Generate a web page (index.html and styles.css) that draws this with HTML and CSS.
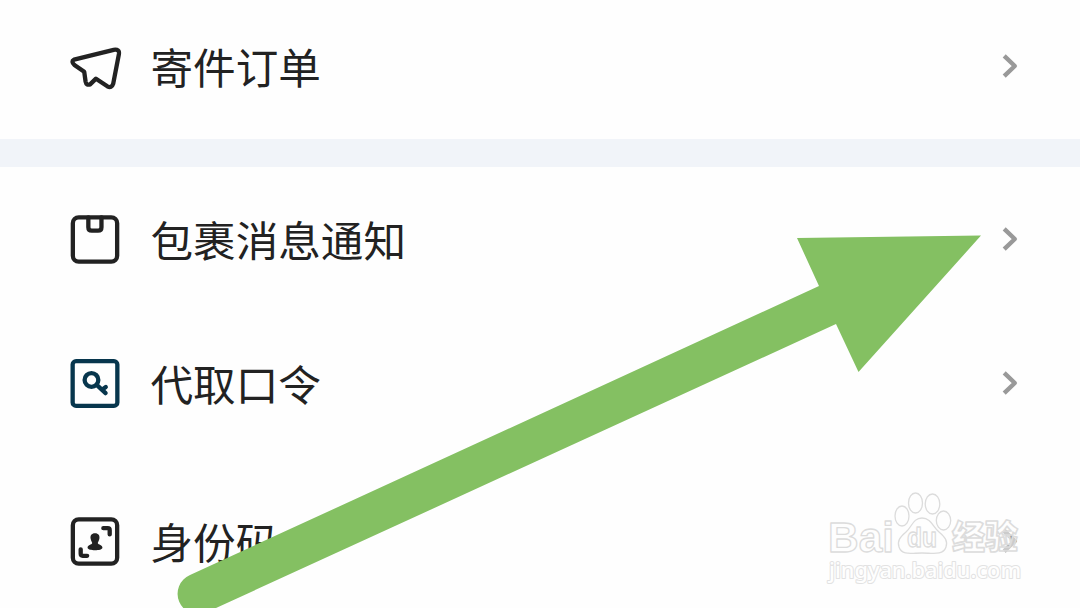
FILE: index.html
```html
<!DOCTYPE html>
<html lang="zh-CN">
<head>
    <meta charset="UTF-8">
    <meta name="viewport" content="width=device-width, initial-scale=1.0">
    <title>包裹服务</title>
    <link rel="stylesheet" href="styles.css">
</head>
<body>

    <div class="menu">
        <div class="group group-first">
            <a class="row">
                <svg class="icon" viewBox="0 0 50 50">
                    <path d="M3.6 17 L44 7 Q50.2 6 49.4 11.4 L43.6 41.4 Q42 46.6 37.6 44.2 L26 36.4 L20 42.2 Q16.2 43.6 15.4 39.4 L14 29.4 L4 22.4 Q0.2 18.8 3.6 17 Z"/>
                </svg>
                <span class="label">寄件订单</span>
                <svg class="chevron" viewBox="0 0 16 24"><path d="M2.2 1.8 L12.8 12 L2.2 22.2"/></svg>
            </a>
        </div>

        <div class="group">
            <a class="row">
                <svg class="icon" viewBox="0 0 50 50">
                    <rect x="2.4" y="2.4" width="45.2" height="45.2" rx="6"/>
                    <path d="M18.2 2.4 V12.5 Q18.2 16 21.7 16 H28.1 Q31.6 16 31.6 12.5 V2.4"/>
                </svg>
                <span class="label">包裹消息通知</span>
                <svg class="chevron" viewBox="0 0 16 24"><path d="M2.2 1.8 L12.8 12 L2.2 22.2"/></svg>
            </a>
            <a class="row">
                <svg class="icon icon-key" viewBox="0 0 50 50">
                    <rect x="2.2" y="2.2" width="45.6" height="45.6" rx="3.5"/>
                    <circle cx="21.4" cy="21.4" r="7"/>
                    <path d="M27 26.6 L35.8 34.8 M32.2 31.4 L36 28.6"/>
                </svg>
                <span class="label">代取口令</span>
                <svg class="chevron" viewBox="0 0 16 24"><path d="M2.2 1.8 L12.8 12 L2.2 22.2"/></svg>
            </a>
            <a class="row row-last">
                <svg class="icon" viewBox="0 0 50 50">
                    <rect x="2.4" y="2.4" width="45.2" height="45.2" rx="6"/>
                    <path d="M33.5 11.4 H38 Q40 11.4 40 13.4 V17.8 M10.4 33 V37.6 Q10.4 39.6 12.4 39.6 H17"/>
                    <path class="solid" d="M25 16.6 C28.6 16.6 30 19 29.5 22 C29.2 24 28.3 25.4 27.8 26.6 C28.5 28.6 32.6 28.4 32.6 31.4 C32.6 34.8 17.4 34.8 17.4 31.4 C17.4 28.4 21.5 28.6 22.2 26.6 C21.7 25.4 20.8 24 20.5 22 C20 19 21.4 16.6 25 16.6 Z"/>
                </svg>
                <span class="label">身份码</span>
                <svg class="chevron" viewBox="0 0 16 24"><path d="M2.2 1.8 L12.8 12 L2.2 22.2"/></svg>
            </a>
        </div>
    </div>

    <svg class="arrow" viewBox="0 0 1080 608">
        <path d="M797 238 L981 235.6 L858.5 372 L836 324 L206 612.6 A20 20 0 0 1 190 575 L819 286 Z"/>
    </svg>

    <svg class="watermark" viewBox="0 0 220 120">
        <g class="mark">
            <ellipse cx="82" cy="36" rx="7" ry="10"/>
            <ellipse cx="95.5" cy="23" rx="7" ry="10"/>
            <ellipse cx="112.5" cy="24" rx="7.3" ry="10"/>
            <ellipse cx="123.5" cy="40.5" rx="7.2" ry="9.5"/>
            <path d="M102 38 C111 38 113 47 119 52 C125 57 128 61 126 67 C123 76 112 73 102 73 C92 73 82 76 79 67 C77 61 80 57 86 52 C92 47 93 38 102 38 Z"/>
            <text class="bai" x="8" y="72" textLength="66" lengthAdjust="spacingAndGlyphs">Bai</text>
            <text class="du" x="87" y="67" textLength="30" lengthAdjust="spacingAndGlyphs">du</text>
            <text class="cn" x="132" y="69" textLength="66" lengthAdjust="spacingAndGlyphs">经验</text>
            <text class="url" x="9" y="98" textLength="192" lengthAdjust="spacingAndGlyphs">jingyan.baidu.com</text>
        </g>
    </svg>

</body>
</html>
```

FILE: styles.css
```css
* {
    margin: 0;
    padding: 0;
    box-sizing: border-box;
}

body {
    position: relative;
    width: 1080px;
    height: 608px;
    background: #fefefe;
    color: #222;
    font-family: "Noto Sans CJK SC", sans-serif;
    overflow: hidden;
}

.group-first {
    height: 167px;
    border-bottom: 28px solid #f1f4f9;
}

.row {
    display: flex;
    align-items: center;
    height: 144px;
    padding: 0 62px 0 70px;
}

.group-first .row {
    height: 133px;
}

.row-last {
    margin-top: 14px;
}

.icon {
    width: 50px;
    height: 49px;
    margin-top: 1px;
    flex: none;
    fill: none;
    stroke: #222;
    stroke-width: 4.4;
    stroke-linecap: round;
    stroke-linejoin: round;
    overflow: visible;
}

.icon-key {
    stroke: #07364d;
}

.icon .solid {
    fill: #222;
    stroke: none;
}

.label {
    flex: 1;
    margin-left: 30.5px;
    font-size: 42.6px;
    line-height: 60px;
    white-space: nowrap;
}

.chevron {
    width: 16px;
    height: 24px;
    fill: none;
    stroke: #999;
    stroke-width: 4.4;
    stroke-linejoin: round;
}

.group-first .label {
    padding-bottom: 1px;
}

.group-first .chevron {
    margin-top: -1px;
}

.arrow {
    position: absolute;
    top: 0;
    left: 0;
    width: 1080px;
    height: 608px;
    fill: #84c062;
}

.watermark {
    position: absolute;
    top: 480px;
    left: 820px;
    width: 220px;
    height: 120px;
}

.mark {
    fill: rgba(254, 254, 254, 0.6);
    stroke: #dcdcdc;
    stroke-width: 1.3;
    stroke-linejoin: round;
    font-family: "Liberation Sans", "Noto Sans CJK SC", sans-serif;
    font-weight: bold;
}

.bai {
    font-size: 43px;
}

.du {
    font-size: 27px;
}

.cn {
    fill: rgba(254, 254, 254, 0.5);
    stroke-width: 1.6;
    font-family: "Noto Sans CJK SC", sans-serif;
    font-size: 33px;
    font-weight: 900;
}

.url {
    fill: #fefefe;
    stroke: #e2e2e2;
    stroke-width: 2;
    paint-order: stroke;
    font-family: "Noto Sans", sans-serif;
    font-size: 22px;
    font-weight: 500;
}
```
